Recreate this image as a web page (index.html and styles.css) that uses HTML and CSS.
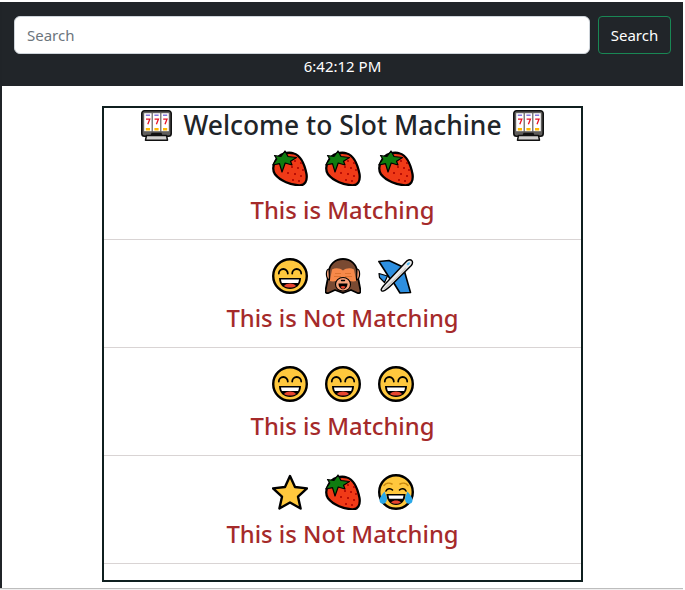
FILE: index.html
```html
<!DOCTYPE html>
<html lang="en">
<head>
<meta charset="utf-8">
<title>Slot Machine</title>
<link rel="stylesheet" href="styles.css">
</head>
<body>
<svg class="sprite" xmlns="http://www.w3.org/2000/svg">
  <symbol id="slot" viewBox="0 0 31 31">
    <path d="M3.500 .8h24a2.700 2.700 0 0 1 2.700 2.700v20a2.700 2.700 0 0 1-2.700 2.700h-24A2.700 2.700 0 0 1 .8 23.500v-20A2.700 2.700 0 0 1 3.500 .8z" fill="#605e5c" stroke="#111" stroke-width="1.600"/>
    <path d="M5.500 25.500h20l1 4.700h-22z" fill="#d2d0ce" stroke="#111" stroke-width="1.500" stroke-linejoin="round"/>
    <path d="M9.500 25.800l1-3h10l1 3z" fill="#111"/>
    <rect x="3.200" y="3.200" width="7.400" height="18" fill="#fff"/>
    <rect x="11.800" y="3.200" width="7.400" height="18" fill="#fff"/>
    <rect x="20.400" y="3.200" width="7.400" height="18" fill="#fff"/>
    <path d="M4.800 4.500h4.200v1.500H4.800zM13.400 4.500h4.200v1.500h-4.200zM22 4.500h4.200v1.500H22z" fill="#8378de"/>
    <path d="M4.800 18h4.200v2.400H4.800zM13.400 18h4.200v2.400h-4.200zM22 18h4.200v2.400H22z" fill="#ffb900"/>
    <path d="M5 9.200h3.800l-2 5M13.600 9.200h3.800l-2 5M22.200 9.200H26l-2 5" fill="none" stroke="#e81123" stroke-width="1.300"/>
  </symbol>
  <symbol id="berry" viewBox="0 0 36 36">
    <path d="M3.500 11C7 3.500 16 1.500 22 3.500 28.500 5.500 32.500 14 34.500 24c1 7-1.500 11.800-7.500 11.300-8-.6-18.500-4-24-11-2.500-3.500-2.300-9 .5-13.300z" fill="#f03a17" stroke="#000" stroke-width="2.300" stroke-linejoin="round"/>
    <path d="M13 1l3 5.500 8.500 1-6 3.800 1.500 3.700-6.800-2L10 22l-2.500-8.300L.8 15l4-6-2.300-3.500L9 6.500z" fill="#107c10" stroke="#000" stroke-width="1.200" stroke-linejoin="round"/>
    <g fill="#a80000">
      <circle cx="23" cy="11" r="1"/><circle cx="29" cy="13" r="1"/><circle cx="20" cy="17" r="1"/><circle cx="26" cy="18" r="1"/><circle cx="31" cy="20" r="1"/>
      <circle cx="16" cy="23" r="1"/><circle cx="23" cy="24" r="1"/><circle cx="29" cy="26" r="1"/><circle cx="21" cy="30" r="1"/><circle cx="27" cy="31" r="1"/>
    </g>
  </symbol>
  <symbol id="grin" viewBox="0 0 36 36">
    <circle cx="18" cy="18" r="16.800" fill="#ffc83d" stroke="#000" stroke-width="2.400"/>
    <path d="M6.800 15.500a4.500 4.500 0 0 1 9 0M20.200 15.500a4.500 4.500 0 0 1 9 0" fill="none" stroke="#000" stroke-width="1.800" stroke-linecap="round"/>
    <path d="M7 20h22c0 7-5 11-11 11S7 27 7 20z" fill="#000"/>
    <path d="M9 21.500h18c-.2 1.800-.6 2.800-1 3.500H10c-.4-.7-.8-1.700-1-3.500z" fill="#fff"/>
    <path d="M12 28c1.500-2 4-2.600 6-2.600s4.500.6 6 2.600c-1.500 1-3.800 1.500-6 1.500s-4.500-.5-6-1.500z" fill="#e8442e"/>
  </symbol>
  <symbol id="monkey" viewBox="0 0 36 36">
    <path d="M18 1c8 0 13.500 5.500 14 12l1.500 9 2 10.500c.2 2-1 3.200-3 2.500L26 32l-8 3-8-3-6.500 3c-2 .7-3.200-.5-3-2.500l2-10.500 1.500-9C4.500 6.500 10 1 18 1z" fill="#7a4a32" stroke="#000" stroke-width="1.800" stroke-linejoin="round"/>
    <path d="M4 11c-3.300.3-3.800 9.500.5 11zM32 11c3.300.3 3.800 9.500-.5 11z" fill="#f7a27a" stroke="#000" stroke-width="1.200"/>
    <path d="M7 11.500c3.500-2 8-1.500 11 1 3-2.500 7.500-3 11-1l2.200 11.500c-3 1-7 .5-9-2-1.200-1.200-2.800-1.500-4.200-1.500s-3 .3-4.200 1.500c-2 2.500-6 3-9 2z" fill="#f7894a"/>
    <path d="M10 15.500h6M9 18.500h7M20 15.500h6M20 18.500h7" stroke="#d9702f" stroke-width=".9"/>
    <path d="M18 19.500c4.500 0 7.500 3.500 7.500 7s-3 6.500-7.500 6.500-7.500-3-7.500-6.500 3-7 7.500-7z" fill="#f7a27a" stroke="#000" stroke-width="1.100"/>
    <path d="M16.500 22.500h3" stroke="#000" stroke-width="1.400" stroke-linecap="round"/>
    <path d="M13.500 25.500h9c0 3.200-2 5.800-4.500 5.800s-4.500-2.600-4.500-5.800z" fill="#000"/>
    <path d="M15.500 28.800c1.500-1 3.500-1 5 0-.8 1.500-1.700 2-2.500 2s-1.700-.5-2.500-2z" fill="#e8442e"/>
  </symbol>
  <symbol id="plane" viewBox="0 0 36 36">
    <path d="M.9 3.500L11 2.500 25 9 12.500 21.500z" fill="#2d8fe0" stroke="#000" stroke-width="1.600" stroke-linejoin="round"/>
    <path d="M26.500 13.500L32.500 34.500 22 35 15.500 24.500z" fill="#2d8fe0" stroke="#000" stroke-width="1.600" stroke-linejoin="round"/>
    <path d="M9.500 18L1 15.500l.5 4 5 5z" fill="#2d8fe0" stroke="#000" stroke-width="1.200" stroke-linejoin="round"/>
    <path d="M29 2.800c2-1.300 3.800-1.200 4.800-.2 1 1.100.9 2.900-.5 4.900L14 26.500c-3 3-6.500 5.800-9 6.600-1 .3-2-.6-1.800-1.600C4 29 7 26 10 23z" fill="#eaeaea" stroke="#000" stroke-width="1.400" stroke-linejoin="round"/>
    <path d="M29.500 5c.8-.8 1.800-1 2.200-.6s.2 1.500-.6 2.200l-1.200 1-1.400-1.400z" fill="#50b8f0"/>
    <path d="M6 31c7-6 15-13 22-21" fill="none" stroke="#c8c6c4" stroke-width="1.200"/>
  </symbol>
  <symbol id="star" viewBox="0 0 36 36">
    <path d="M18 2l5 11 12 1.400-9 8.300 2.600 11.800L18 28.500 7.400 34.500 10 22.700 1 14.400 13 13z" fill="#ffc83d" stroke="#000" stroke-width="2.400" stroke-linejoin="round"/>
  </symbol>
  <symbol id="joy" viewBox="0 0 36 36">
    <circle cx="18" cy="18" r="16.800" fill="#ffc83d" stroke="#000" stroke-width="2.400"/>
    <path d="M6 11.500c2-2.500 5.500-3 8-1.500M22 10c2.500-1.500 6-1 8 1.500" fill="none" stroke="#c98a10" stroke-width="1.500" stroke-linecap="round"/>
    <path d="M8 17a4 4 0 0 1 6.500-1M21.500 16a4 4 0 0 1 6.500 1" fill="none" stroke="#000" stroke-width="1.600" stroke-linecap="round"/>
    <path d="M8.500 20h19c0 6.500-4 11-9.500 11s-9.500-4.500-9.500-11z" fill="#000"/>
    <path d="M10.500 21.500h15c-.2 1.400-.5 2.300-.8 3.200H11.300c-.3-.9-.6-1.800-.8-3.200z" fill="#fff"/>
    <path d="M13 28.500c1.300-1.500 3.200-2 5-2s3.700.5 5 2c-1.300 1-3.200 1.300-5 1.300s-3.700-.3-5-1.300z" fill="#e8442e"/>
    <path d="M6.500 17.500c-2 2.500-5 5.500-5 9 0 2.500 2.500 4 4.800 3 2.700-1.200 2.900-4.500 2.400-6.500z" fill="#29a8e8"/>
    <path d="M29.500 17.500c2 2.500 5 5.500 5 9 0 2.500-2.500 4-4.800 3-2.700-1.200-2.900-4.500-2.400-6.500z" fill="#29a8e8"/>
  </symbol>
</svg>
<div class="frame">
  <nav class="navbar">
    <form class="search">
      <input class="search-input" type="search" placeholder="Search">
      <button class="search-btn" type="button">Search</button>
    </form>
    <div class="clock">6:42:12 PM</div>
  </nav>
  <main class="content">
    <section class="machine">
      <h1 class="title">
        <svg class="slot-icon"><use href="#slot"/></svg>
        <span>Welcome to Slot Machine</span>
        <svg class="slot-icon"><use href="#slot"/></svg>
      </h1>
      <div class="spin">
        <div class="reels">
          <svg class="emoji"><use href="#berry"/></svg>
          <svg class="emoji"><use href="#berry"/></svg>
          <svg class="emoji"><use href="#berry"/></svg>
        </div>
        <p class="result">This is Matching</p>
        <hr class="rule">
      </div>
      <div class="spin">
        <div class="reels">
          <svg class="emoji"><use href="#grin"/></svg>
          <svg class="emoji"><use href="#monkey"/></svg>
          <svg class="emoji"><use href="#plane"/></svg>
        </div>
        <p class="result">This is Not Matching</p>
        <hr class="rule">
      </div>
      <div class="spin">
        <div class="reels">
          <svg class="emoji"><use href="#grin"/></svg>
          <svg class="emoji"><use href="#grin"/></svg>
          <svg class="emoji"><use href="#grin"/></svg>
        </div>
        <p class="result">This is Matching</p>
        <hr class="rule">
      </div>
      <div class="spin">
        <div class="reels">
          <svg class="emoji"><use href="#star"/></svg>
          <svg class="emoji"><use href="#berry"/></svg>
          <svg class="emoji"><use href="#joy"/></svg>
        </div>
        <p class="result">This is Not Matching</p>
        <hr class="rule">
      </div>
    </section>
  </main>
  <footer class="edge"></footer>
</div>
</body>
</html>
```
FILE: styles.css
```css
* { box-sizing: border-box; }
html, body { margin: 0; height: 100%; }
body {
  background: #fff;
  color: #212529;
  font-family: "Noto Sans", "Open Sans", sans-serif;
  overflow: hidden;
  padding-top: 2px;
}
.sprite { display: none; }
.frame {
  height: 588px;
  display: flex;
  flex-direction: column;
  border-left: 2px solid #202428;
  margin-right: 2px;
}
.navbar {
  background: #212529;
  height: 84px;
  padding: 14px 12px 0;
}
.search { display: flex; gap: 8px; margin: 0; }
.search-input {
  flex: 1;
  height: 38px;
  border: 1px solid #ced4da;
  border-radius: 6px;
  padding: 0 12px;
  font: 400 15px "Noto Sans", sans-serif;
  background: #fff;
}
.search-input::placeholder { color: #6c757d; opacity: 1; }
.search-btn {
  width: 73px;
  height: 38px;
  background: transparent;
  border: 1px solid #198754;
  border-radius: 4px;
  color: #fff;
  font: 400 15px "Noto Sans", sans-serif;
  padding: 0;
}
.clock {
  color: #fff;
  font-size: 15px;
  line-height: 24px;
  text-align: center;
}
.content { flex: 1; padding-top: 20px; }
.machine {
  width: 481px;
  height: 476px;
  margin: 0 auto;
  border: 2px solid #0f1f1f;
  overflow: hidden;
}
.title {
  margin: 0 0 8px;
  height: 34px;
  display: flex;
  justify-content: center;
  align-items: center;
  gap: 11px;
  font-size: 26.4px;
  font-weight: 500;
  line-height: 34px;
}
.slot-icon { width: 31px; height: 31px; flex: none; }
.spin { height: 108px; }
.reels { display: flex; justify-content: center; gap: 17px; }
.emoji { width: 36px; height: 36px; flex: none; }
.result {
  margin: 7px 0 12px;
  color: #a52a2a;
  font-size: 23.8px;
  font-weight: 500;
  line-height: 34px;
  text-align: center;
}
.rule { margin: 0; border: 0; border-top: 1px solid #d9d4d4; }
.edge { height: 2px; border-top: 1px solid #bdbdbd; background: #f0f0f0; margin-left: -2px; }
```
